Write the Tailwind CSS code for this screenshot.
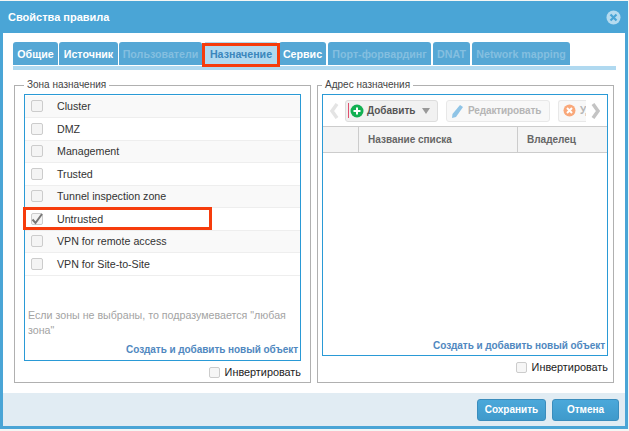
<!DOCTYPE html>
<html lang="ru">
<head>
    <meta charset="UTF-8">
    <title>Свойства правила</title>
    <script src="https://cdn.jsdelivr.net/npm/@tailwindcss/browser@4"></script>
</head>
<body class="bg-[#f4f6f4] w-[629px] h-[431px] overflow-hidden font-['Liberation_Sans',sans-serif] text-[10.67px] text-[#333]">
    <div class="relative mt-px w-[628px] h-[428px] flex flex-col border-x-[3px] border-b-[3px] border-[#4aa5d6] bg-white">
        <!-- title -->
        <div class="h-[32px] shrink-0 bg-[#4aa5d6] flex items-center justify-between pl-[5px] pr-[4px] pt-px">
            <span class="text-white font-bold text-[11px]">Свойства правила</span>
            <svg width="15" height="15" viewBox="0 0 15 15"><circle cx="7.5" cy="7.5" r="7" fill="#b5dbef"/><path d="M4.5 4.5l6 6M10.5 4.5l-6 6" stroke="#4aa5d6" stroke-width="2.2"/></svg>
        </div>

        <!-- tabs -->
        <div class="mt-[9px] ml-[10px] mr-[9px] h-[28px] shrink-0 border-b-[4px] border-[#b0d9f0] flex gap-px font-bold text-white">
            <div class="h-[23px] w-[45px] rounded-t-[3px] bg-[#55a7d5] flex items-center justify-center">Общие</div>
            <div class="h-[23px] w-[59px] rounded-t-[3px] bg-[#55a7d5] flex items-center justify-center">Источник</div>
            <div class="h-[23px] w-[83px] rounded-t-[3px] bg-[#55a7d5] text-[#84bfe0] flex items-center justify-center">Пользователи</div>
            <div class="h-[24px] w-[72px] ml-[2px] bg-[#b0d9f0] text-[#3b87bd] flex items-center justify-center">Назначение</div>
            <div class="h-[23px] w-[47px] ml-px rounded-t-[3px] bg-[#55a7d5] flex items-center justify-center">Сервис</div>
            <div class="h-[23px] w-[103px] ml-px rounded-t-[3px] bg-[#55a7d5] text-[#84bfe0] flex items-center justify-center">Порт-форвардинг</div>
            <div class="h-[23px] w-[37px] ml-px rounded-t-[3px] bg-[#55a7d5] text-[#84bfe0] flex items-center justify-center">DNAT</div>
            <div class="h-[23px] w-[98px] ml-px rounded-t-[3px] bg-[#55a7d5] text-[#84bfe0] flex items-center justify-center">Network mapping</div>
        </div>
        <div class="absolute left-[199px] top-[42px] w-[78px] h-[24px] border-[3px] border-[#f63c0c]"></div>

        <!-- two panels -->
        <div class="mt-[8px] ml-[11px] flex gap-[6px] flex-1">
            <fieldset class="w-[297px] h-[305px] border border-[#b0b0b0] px-[9px] pt-[2px]">
                <legend class="px-[3px] leading-[14px] text-[10px] text-[#444]">Зона назначения</legend>
                <div class="relative h-[267px] border border-[#2a9ad6] flex flex-col">
                    <div id="zones" class="flex flex-col pt-[0.5px]">
                        <div class="h-[22.5px] flex items-center border-b border-[#eee] bg-[#f9f9f9]">
                            <span class="ml-[6px] w-[12px] h-[12px] rounded-[2px] border border-[#ccc] bg-[#f4f4f4]"></span><span class="ml-[14px]">Cluster</span>
                        </div>
                        <div class="h-[22.5px] flex items-center border-b border-[#eee]">
                            <span class="ml-[6px] w-[12px] h-[12px] rounded-[2px] border border-[#ccc] bg-[#f4f4f4]"></span><span class="ml-[14px]">DMZ</span>
                        </div>
                        <div class="h-[22.5px] flex items-center border-b border-[#eee] bg-[#f9f9f9]">
                            <span class="ml-[6px] w-[12px] h-[12px] rounded-[2px] border border-[#ccc] bg-[#f4f4f4]"></span><span class="ml-[14px]">Management</span>
                        </div>
                        <div class="h-[22.5px] flex items-center border-b border-[#eee]">
                            <span class="ml-[6px] w-[12px] h-[12px] rounded-[2px] border border-[#ccc] bg-[#f4f4f4]"></span><span class="ml-[14px]">Trusted</span>
                        </div>
                        <div class="h-[22.5px] flex items-center border-b border-[#eee] bg-[#f9f9f9]">
                            <span class="ml-[6px] w-[12px] h-[12px] rounded-[2px] border border-[#ccc] bg-[#f4f4f4]"></span><span class="ml-[14px]">Tunnel inspection zone</span>
                        </div>
                        <div class="relative h-[22.5px] flex items-center border-b border-[#eee]">
                            <span class="ml-[6px] w-[12px] h-[12px] rounded-[2px] border border-[#ccc] bg-[#f4f4f4] flex items-center justify-center">
                                <svg width="14" height="14" viewBox="0 0 14 14" class="shrink-0"><path d="M2.5 7.5l3 3.5L12 2" fill="none" stroke="#777" stroke-width="2"/></svg>
                            </span><span class="ml-[14px]">Untrusted</span>
                            <div class="absolute -left-[2px] -top-px w-[189px] h-[23px] border-[3px] border-[#f63c0c]"></div>
                        </div>
                        <div class="h-[22.5px] flex items-center border-b border-[#eee] bg-[#f9f9f9]">
                            <span class="ml-[6px] w-[12px] h-[12px] rounded-[2px] border border-[#ccc] bg-[#f4f4f4]"></span><span class="ml-[14px]">VPN for remote access</span>
                        </div>
                        <div class="h-[22.5px] flex items-center border-b border-[#eee]">
                            <span class="ml-[6px] w-[12px] h-[12px] rounded-[2px] border border-[#ccc] bg-[#f4f4f4]"></span><span class="ml-[14px]">VPN for Site-to-Site</span>
                        </div>
                    </div>
                    <p class="mt-auto px-[3px] leading-[15px] text-[#a3a3a3]">Если зоны не выбраны, то подразумевается "любая зона"</p>
                    <div class="mt-[5px] mb-[4px] pr-[2px] text-right font-bold text-[10px] tracking-[-0.06px] leading-[13px] text-[#5088c0]">Создать и добавить новый объект</div>
                </div>
                <div class="mt-[3px] h-[16px] flex items-center justify-end gap-[5px] text-[10.85px] text-[#222]">
                    <span class="w-[11px] h-[11px] rounded-[2px] border border-[#ccc] bg-[#f6f6f6]"></span>Инвертировать
                </div>
            </fieldset>

            <fieldset class="w-[297px] h-[305px] border border-[#b0b0b0] pl-[4px] pr-[5px] pt-[2px]">
                <legend class="px-[3px] leading-[14px] text-[10px] text-[#444]">Адрес назначения</legend>
                <div class="h-[262px] border border-[#2a9ad6] flex flex-col">
                    <div class="h-[32px] shrink-0 flex items-center border-b border-[#ccc] font-bold text-[10px]">
                        <svg width="10" height="16" viewBox="0 0 10 16" class="ml-[6px] shrink-0"><path d="M8 1L3 8l5 7" fill="none" stroke="#e4e4e4" stroke-width="3.5"/></svg>
                        <div class="relative ml-[6px] w-[93px] h-[22px] shrink-0 rounded-[3px] border border-[#ddd] bg-[#f1f1f1] flex items-center text-[#555]">
                            <span class="absolute left-[2px] top-[2px] w-px h-[15px] bg-[#e0506e]"></span>
                            <svg width="14" height="14" viewBox="0 0 14 14" class="ml-[4px] shrink-0"><circle cx="7" cy="7" r="6.5" fill="#12b052"/><path d="M7 3.5v7M3.5 7h7" stroke="#fff" stroke-width="2"/></svg>
                            <span class="ml-[3px]">Добавить</span>
                            <svg width="8" height="6" viewBox="0 0 8 6" class="ml-[7px]"><path d="M0 0h8L4 6z" fill="#999"/></svg>
                        </div>
                        <div class="ml-[8px] w-[104px] h-[22px] shrink-0 rounded-[3px] border border-[#e8e8e8] bg-[#f8f8f8] flex items-center text-[#b5b5b5]">
                            <svg width="13" height="14" viewBox="0 0 13 14" class="ml-[4px] shrink-0"><path d="M9 1l3 2-7 10-4 1 .5-4z" fill="#8fc4e6"/></svg>
                            <span class="ml-[4px] tracking-[-0.12px]">Редактировать</span>
                        </div>
                        <div class="ml-[8px] w-[28px] h-[22px] shrink-0 overflow-hidden rounded-l-[3px] border-y border-l border-[#e8e8e8] bg-[#f8f8f8] flex items-center text-[#b5b5b5]">
                            <svg width="13" height="13" viewBox="0 0 13 13" class="ml-[4px] shrink-0"><circle cx="6.5" cy="6.5" r="6" fill="#f9a87a"/><path d="M4 4l5 5M9 4l-5 5" stroke="#fff" stroke-width="2"/></svg>
                            <span class="ml-[4px]">Удалить</span>
                        </div>
                        <svg width="10" height="16" viewBox="0 0 10 16" class="ml-[5px] shrink-0"><path d="M2 1l5 7-5 7" fill="none" stroke="#c4c4c4" stroke-width="3.5"/></svg>
                    </div>
                    <div class="h-[26px] shrink-0 flex bg-[#f4f4f4] border-b border-[#ccc] font-bold text-[10px] text-[#666]">
                        <div class="w-[36px] border-r border-[#ccc]"></div>
                        <div class="w-[159px] border-r border-[#ccc] pl-[9px] flex items-center">Название списка</div>
                        <div class="pl-[9px] flex items-center">Владелец</div>
                    </div>
                    <div class="mt-auto mb-[3px] pr-[2px] text-right font-bold text-[10px] tracking-[-0.06px] leading-[13px] text-[#5088c0]">Создать и добавить новый объект</div>
                </div>
                <div class="mt-[3px] h-[16px] flex items-center justify-end gap-[5px] text-[10.85px] text-[#222]">
                    <span class="w-[11px] h-[11px] rounded-[2px] border border-[#ccc] bg-[#f6f6f6]"></span>Инвертировать
                </div>
            </fieldset>
        </div>

        <!-- footer -->
        <div class="h-[33px] shrink-0 bg-[#e1ecf3] flex items-center justify-end gap-[6px] pr-[6px] font-bold text-[10px] text-white">
            <button class="w-[69px] h-[22px] rounded-[3px] border border-[#3a8dbd] bg-gradient-to-b from-[#4ba8da] to-[#3f9acb]">Сохранить</button>
            <button class="w-[67px] h-[22px] rounded-[3px] border border-[#3a8dbd] bg-gradient-to-b from-[#4ba8da] to-[#3f9acb]">Отмена</button>
        </div>
    </div>
</body>
</html>
